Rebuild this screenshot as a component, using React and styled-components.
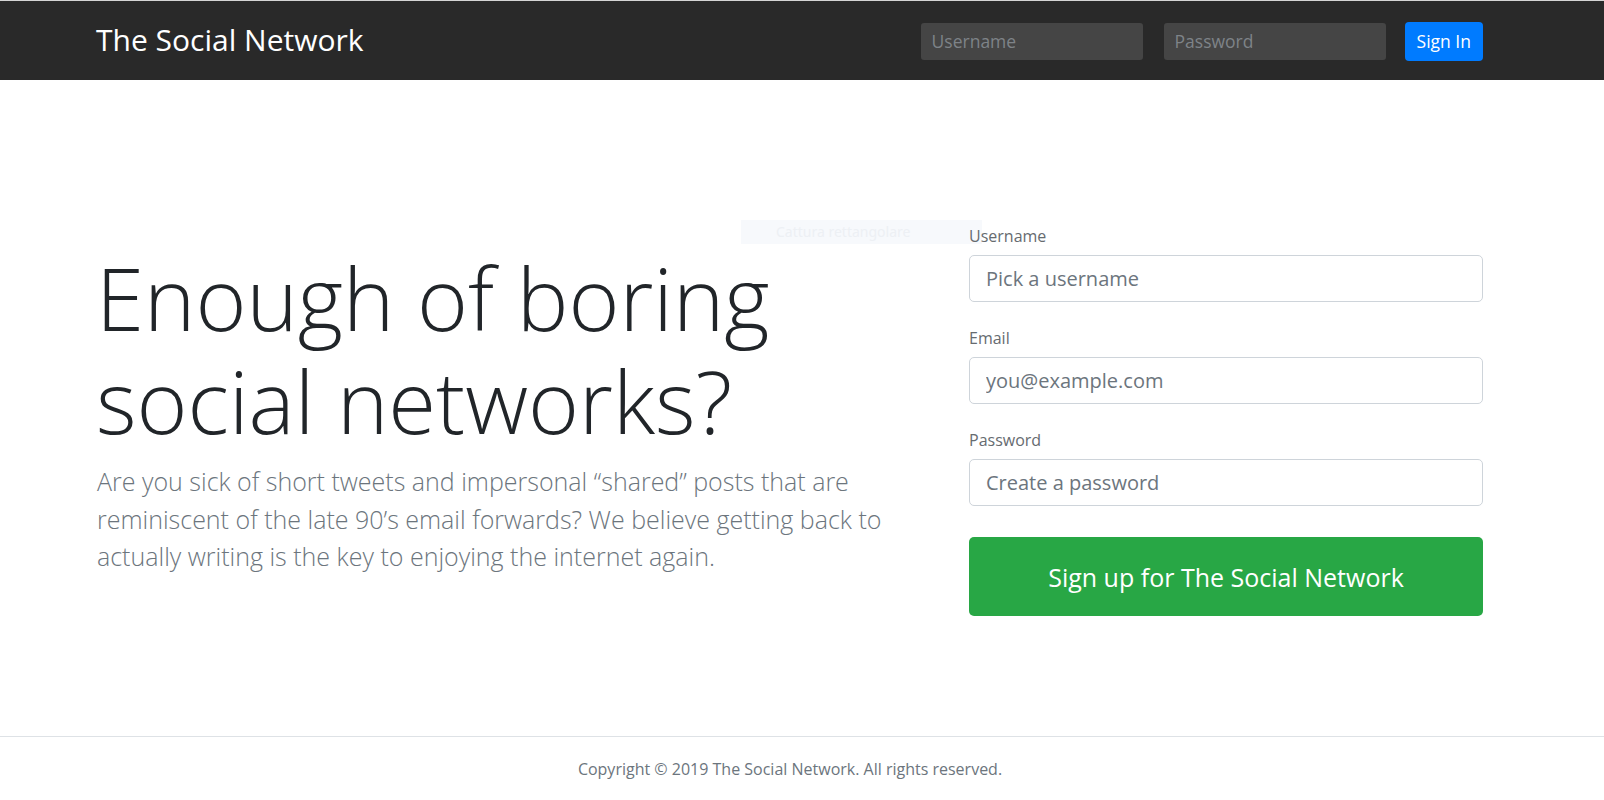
import React from "react";
import styled, { createGlobalStyle } from "styled-components";

const Global = createGlobalStyle`
  html, body { margin: 0; padding: 0; background: #fff; }
  body {
    font-family: "Open Sans", "Noto Sans", sans-serif;
    color: #212529;
    -webkit-font-smoothing: antialiased;
  }
  * { box-sizing: border-box; }
`;

const Container = styled.div`
  padding: 0 121px 0 97px;
`;

const Navbar = styled.nav`
  height: 80px;
  background: #292929;
  border-top: 1px solid #d4d4d4;
`;

const NavInner = styled(Container)`
  height: 100%;
  display: flex;
  align-items: center;
  justify-content: space-between;
`;

const Brand = styled.a`
  color: #fff;
  font-size: 30px;
  line-height: 40px;
  text-decoration: none;
  margin-top: -2px;
  margin-left: -1px;
`;

const NavForm = styled.form`
  display: flex;
  align-items: center;
  gap: 21px;
  margin-top: 1px;
`;

const NavInput = styled.input`
  width: 222px;
  height: 37px;
  background: #454545;
  border: none;
  border-radius: 3px;
  padding: 0 11px;
  color: #fff;
  font-family: inherit;
  font-size: 17.5px;
  outline: none;
  &::placeholder { color: #7e8388; }
`;

const SmallButton = styled.button`
  height: 39px;
  padding: 0 12px;
  margin-left: -2px;
  border: none;
  border-radius: 4px;
  background: #007bff;
  color: #fff;
  font-family: inherit;
  font-size: 17.5px;
  cursor: pointer;
`;

const Hero = styled.main`
  position: relative;
  height: 656px;
  display: flex;
  align-items: center;
`;

const HeroGrid = styled(Container)`
  width: 100%;
  display: grid;
  grid-template-columns: 794px 1fr;
  column-gap: 78px;
  align-items: center;
  margin-top: 6px;
`;

const Title = styled.h1`
  margin: 0 0 11px;
  font-size: 87px;
  font-weight: 300;
  line-height: 103px;
  color: #212529;
  margin-left: -1px;
`;

const Lead = styled.p`
  margin: 0;
  font-size: 25px;
  font-weight: 300;
  line-height: 37.5px;
  color: #6c757d;
`;

const SignupForm = styled.form`
  display: flex;
  flex-direction: column;
  margin-top: 18px;
`;

const Group = styled.div`
  display: flex;
  flex-direction: column;
  margin-bottom: 24px;
`;

const Label = styled.label`
  position: relative;
  font-size: 16px;
  line-height: 24px;
  color: #666b70;
  margin-bottom: 7px;
`;

const Input = styled.input`
  height: 47px;
  border: 1px solid #ced4da;
  border-radius: 5px;
  padding: 0 16px;
  font-family: inherit;
  font-size: 20px;
  color: #495057;
  outline: none;
  &::placeholder { color: #6c757d; }
`;

const BigButton = styled.button`
  margin-top: 7px;
  height: 79px;
  border: none;
  border-radius: 5px;
  background: #28a745;
  color: #fff;
  font-family: inherit;
  font-size: 25px;
  cursor: pointer;
`;

const SnipHint = styled.div`
  position: absolute;
  left: 741px;
  top: 140px;
  width: 241px;
  height: 24px;
  background: #f7f9fc;
  color: #edf0f4;
  font-family: "Noto Sans", "Open Sans", sans-serif;
  font-size: 14px;
  line-height: 24px;
  padding-left: 35px;
  pointer-events: none;
`;

const Footer = styled.footer`
  border-top: 1px solid #dee2e6;
  padding: 20px 0 24px;
`;

const FooterText = styled(Container)`
  text-align: center;
  font-size: 16px;
  line-height: 24px;
  color: #6c757d;
`;

export default function App() {
  return (
    <>
      <Global />
      <Navbar>
        <NavInner>
          <Brand href="#">The Social Network</Brand>
          <NavForm onSubmit={(e) => e.preventDefault()}>
            <NavInput placeholder="Username" />
            <NavInput type="password" placeholder="Password" />
            <SmallButton type="submit">Sign In</SmallButton>
          </NavForm>
        </NavInner>
      </Navbar>
      <Hero>
        <SnipHint>Cattura rettangolare</SnipHint>
        <HeroGrid>
          <div>
            <Title>
              Enough of boring
              <br />
              social networks?
            </Title>
            <Lead>
              Are you sick of short tweets and impersonal “shared” posts that are
              reminiscent of the late 90’s email forwards? We believe getting back
              to actually writing is the key to enjoying the internet again.
            </Lead>
          </div>
          <SignupForm onSubmit={(e) => e.preventDefault()}>
            <Group>
              <Label>Username</Label>
              <Input placeholder="Pick a username" />
            </Group>
            <Group>
              <Label>Email</Label>
              <Input placeholder="you@example.com" />
            </Group>
            <Group>
              <Label>Password</Label>
              <Input type="password" placeholder="Create a password" />
            </Group>
            <BigButton type="submit">Sign up for The Social Network</BigButton>
          </SignupForm>
        </HeroGrid>
      </Hero>
      <Footer>
        <FooterText>Copyright © 2019 The Social Network. All rights reserved.</FooterText>
      </Footer>
    </>
  );
}
